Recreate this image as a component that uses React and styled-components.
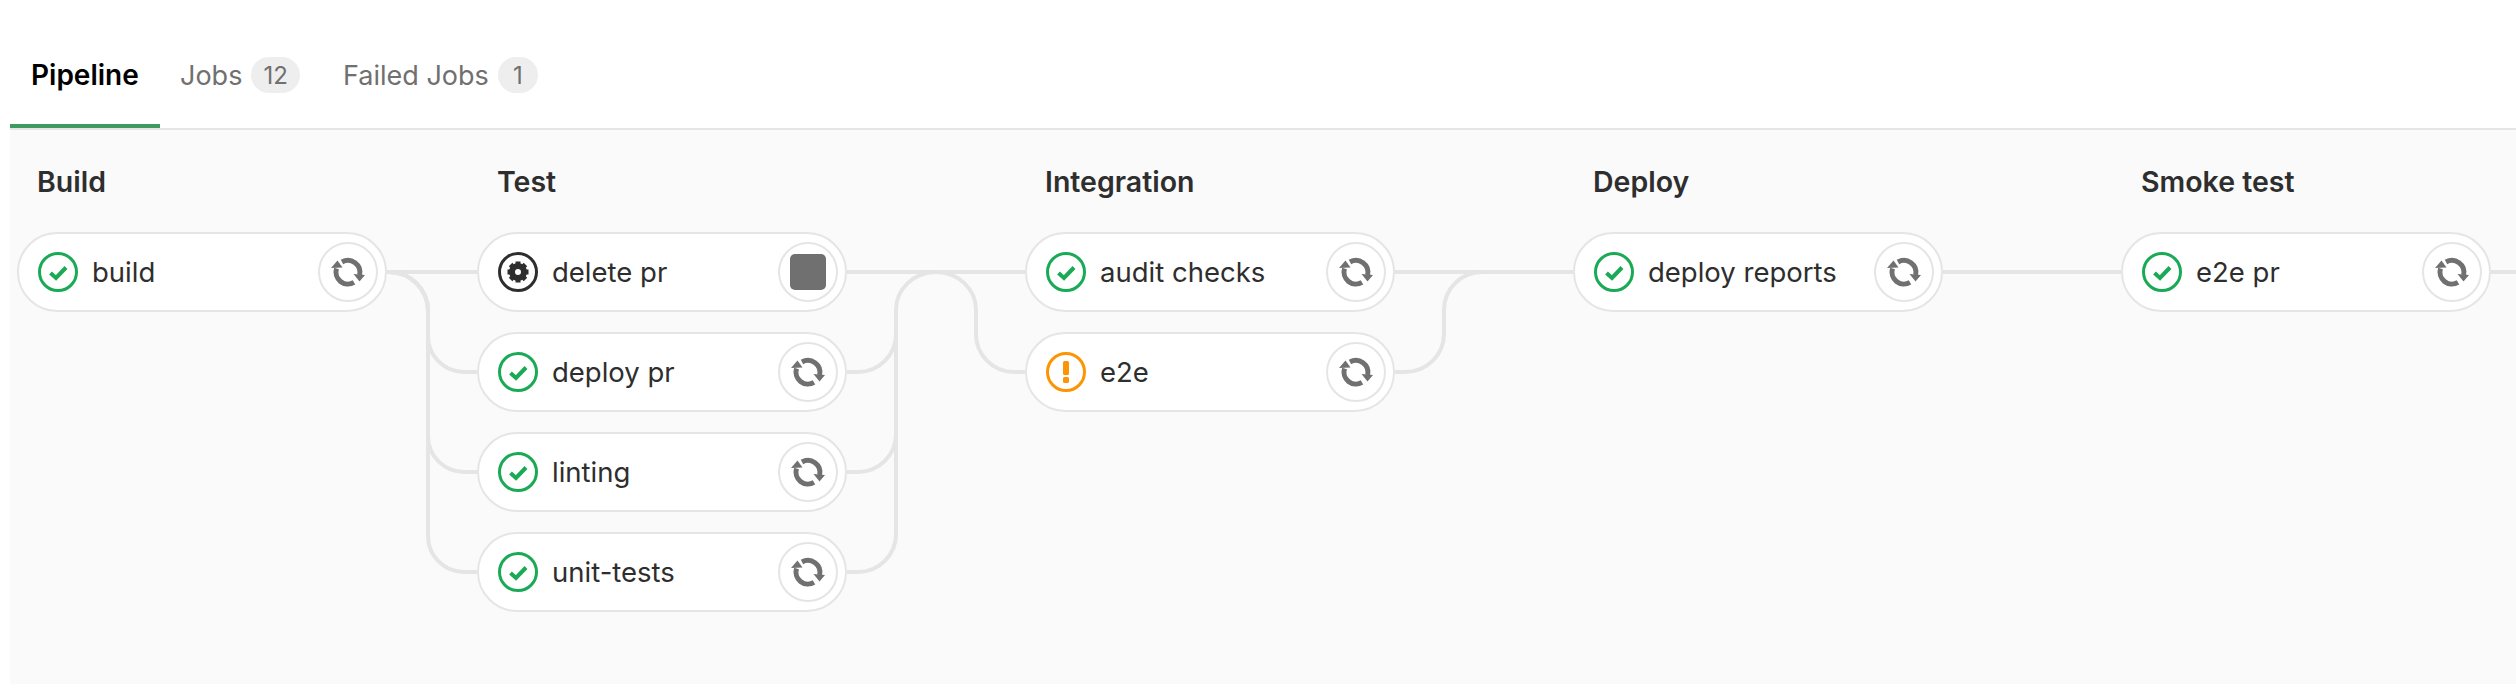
import React from "react";
import styled, { createGlobalStyle } from "styled-components";

const GlobalStyle = createGlobalStyle`
  html, body {
    margin: 0;
    background: #fff;
    overflow: hidden;
  }
  body {
    font-family: Inter, Roboto, "Liberation Sans", sans-serif;
  }
`;

const Page = styled.div`
  width: 2516px;
  height: 696px;
  padding: 0 0 12px 10px;
  box-sizing: border-box;
  display: flex;
  flex-direction: column;
`;

const Tabs = styled.div`
  display: flex;
  height: 130px;
  box-sizing: border-box;
  border-bottom: 2px solid #e5e5e5;
`;

const Tab = styled.div`
  display: flex;
  align-items: center;
  gap: 9px;
  width: ${(props) => props.$width}px;
  height: 128px;
  padding: 26px 0 0 ${(props) => (props.$active ? 21 : 20)}px;
  box-sizing: border-box;
  font-size: ${(props) => (props.$active ? 28 : 27)}px;
  font-weight: ${(props) => (props.$active ? 600 : 400)};
  color: ${(props) => (props.$active ? "#000" : "#707070")};
  border-bottom: 4px solid ${(props) => (props.$active ? "#3f9a62" : "transparent")};
`;

const Badge = styled.span`
  display: flex;
  align-items: center;
  justify-content: center;
  min-width: 40px;
  height: 36px;
  padding: 0 12px;
  box-sizing: border-box;
  border-radius: 18px;
  background: #eee;
  color: #707070;
  font-size: 24px;
`;

const Graph = styled.div`
  flex: 1;
  display: flex;
  align-items: flex-start;
  padding: 35px 0 0 7px;
  background: #fafafa;
  overflow: hidden;
`;

const Stage = styled.div`
  flex: none;
  width: 370px;
`;

const StageTitle = styled.div`
  height: 34px;
  margin-bottom: 33px;
  padding-left: 20px;
  font-size: 28.5px;
  line-height: 34px;
  font-weight: 600;
  color: #2e2e2e;
`;

const JobList = styled.div`
  display: flex;
  flex-direction: column;
  gap: 20px;
`;

const Job = styled.div`
  display: flex;
  align-items: center;
  gap: 14px;
  height: 80px;
  padding: 0 7px 0 19px;
  box-sizing: border-box;
  border: 2px solid #e5e5e5;
  border-radius: 40px;
  background: #fff;
`;

const JobName = styled.span`
  flex: 1;
  font-size: 27.5px;
  color: #2e2e2e;
`;

const ActionButton = styled.div`
  display: flex;
  align-items: center;
  justify-content: center;
  width: 60px;
  height: 60px;
  box-sizing: border-box;
  border: 2px solid #e5e5e5;
  border-radius: 50%;
  background: #fff;
`;

const StopSquare = styled.div`
  width: 36px;
  height: 36px;
  border-radius: 5px;
  background: #707070;
`;

const ConnectorSvg = styled.svg`
  flex: none;
  margin-top: 67px;
  fill: none;
  stroke: #e5e5e5;
  stroke-width: 4;
`;

const Connector = ({ width, paths }) => (
  <ConnectorSvg width={width} height="400" viewBox={`0 0 ${width} 400`}>
    {paths.map((d) => (
      <path key={d} d={d} />
    ))}
  </ConnectorSvg>
);

const SuccessIcon = () => (
  <svg width="40" height="40" viewBox="0 0 40 40" fill="none">
    <circle cx="20" cy="20" r="18.5" stroke="#1aaa55" strokeWidth="3" />
    <path d="M12.5 21l5.5 5 10-10.5" stroke="#1aaa55" strokeWidth="4" />
  </svg>
);

const WarningIcon = () => (
  <svg width="40" height="40" viewBox="0 0 40 40" fill="none">
    <circle cx="20" cy="20" r="18.5" stroke="#fc9403" strokeWidth="3" />
    <rect x="17" y="9" width="6" height="14" rx="1.5" fill="#fc9403" />
    <rect x="17" y="25" width="6" height="6" rx="1.5" fill="#fc9403" />
  </svg>
);

const ManualIcon = () => (
  <svg width="40" height="40" viewBox="0 0 40 40" fill="none">
    <circle cx="20" cy="20" r="18.5" stroke="#2e2e2e" strokeWidth="3" />
    <circle cx="20" cy="20" r="6" stroke="#2e2e2e" strokeWidth="6" />
    {[0, 45, 90, 135, 180, 225, 270, 315].map((a) => (
      <rect key={a} x="17.5" y="9.5" width="5" height="4" fill="#2e2e2e" transform={`rotate(${a} 20 20)`} />
    ))}
  </svg>
);

const RetryIcon = () => (
  <svg width="40" height="38" viewBox="0 0 40 38" fill="none">
    <path d="M14 9A12 12 0 0 1 31.6 22" stroke="#707070" strokeWidth="5" />
    <path d="M26 29.4A12 12 0 0 1 8.5 15.5" stroke="#707070" strokeWidth="5" />
    <path d="M3 15l11.5 -.5-5-7z" fill="#707070" />
    <path d="M25.5 21l11.5 1-5.5 6.5z" fill="#707070" />
  </svg>
);

const statusIcons = {
  success: SuccessIcon,
  warning: WarningIcon,
  manual: ManualIcon,
};

const JobRow = ({ name, status = "success", stop }) => {
  const Icon = statusIcons[status];
  return (
    <Job>
      <Icon />
      <JobName>{name}</JobName>
      <ActionButton>{stop ? <StopSquare /> : <RetryIcon />}</ActionButton>
    </Job>
  );
};

const buildJoin = (y) => `M2 40A39 39 0 0 1 41 79V${y - 36}A36 36 0 0 0 77 ${y}H90`;
const testJoin = (y) => `M0 ${y}H11A38 38 0 0 0 49 ${y - 38}V78`;

const App = () => (
  <Page>
    <GlobalStyle />
    <Tabs>
      <Tab $active $width={150}>Pipeline</Tab>
      <Tab $width={163}>
        Jobs <Badge>12</Badge>
      </Tab>
      <Tab $width={240}>
        Failed Jobs <Badge>1</Badge>
      </Tab>
    </Tabs>
    <Graph>
      <Stage>
        <StageTitle>Build</StageTitle>
        <JobList>
          <JobRow name="build" />
        </JobList>
      </Stage>
      <Connector width={90} paths={["M0 40H90", buildJoin(140), buildJoin(240), buildJoin(340)]} />
      <Stage>
        <StageTitle>Test</StageTitle>
        <JobList>
          <JobRow name="delete pr" status="manual" stop />
          <JobRow name="deploy pr" />
          <JobRow name="linting" />
          <JobRow name="unit-tests" />
        </JobList>
      </Stage>
      <Connector
        width={178}
        paths={[
          "M0 40H178",
          testJoin(140),
          testJoin(240),
          testJoin(340),
          "M49 78A40 38 0 0 1 129 78V102A38 38 0 0 0 167 140H178",
        ]}
      />
      <Stage>
        <StageTitle>Integration</StageTitle>
        <JobList>
          <JobRow name="audit checks" />
          <JobRow name="e2e" status="warning" />
        </JobList>
      </Stage>
      <Connector width={178} paths={["M0 40H178", "M0 140H10A39 38 0 0 0 49 102V78A38 38 0 0 1 87 40"]} />
      <Stage>
        <StageTitle>Deploy</StageTitle>
        <JobList>
          <JobRow name="deploy reports" />
        </JobList>
      </Stage>
      <Connector width={178} paths={["M0 40H178"]} />
      <Stage>
        <StageTitle>Smoke test</StageTitle>
        <JobList>
          <JobRow name="e2e pr" />
        </JobList>
      </Stage>
      <Connector width={25} paths={["M0 40H25"]} />
    </Graph>
  </Page>
);

export default App;
